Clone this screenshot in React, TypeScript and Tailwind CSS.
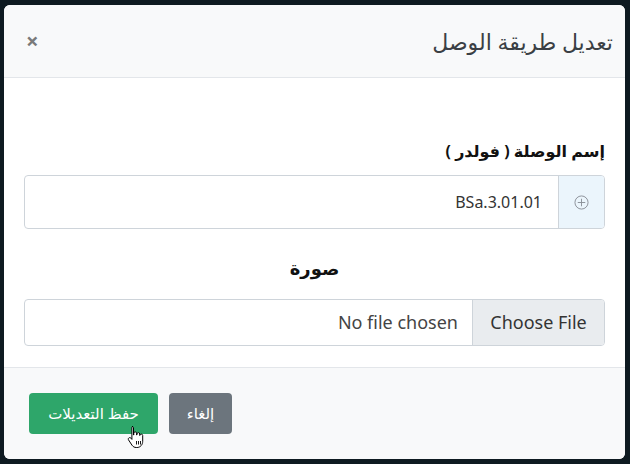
import React from "react";

const FONT = { fontFamily: '"Noto Sans", "DejaVu Sans", sans-serif' };

function HandCursor() {
  return (
    <svg width="18" height="24" viewBox="0 0 18 24" className="absolute left-[127px] top-[425px]">
      <path
        d="M5 1.5c.9 0 1.5.6 1.5 1.5v7h.3V8.2c0-.8.6-1.4 1.4-1.4s1.4.6 1.4 1.4V10h.3V9c0-.8.6-1.4 1.4-1.4s1.4.6 1.4 1.4v1.4h.3c0-.8.6-1.3 1.3-1.3.8 0 1.4.6 1.4 1.4v5.8c0 3.3-2.3 6.2-5.6 6.2H9.3c-1.9 0-3.2-.8-4.3-2.3L1.6 15c-.5-.7-.4-1.6.3-2.1.7-.5 1.6-.3 2.1.3l.9 1.2V3c0-.9.2-1.5 1.1-1.5z"
        fill="#fff"
        stroke="#000"
        strokeWidth="1"
        strokeLinejoin="round"
      />
      <path d="M9.5 16v3.5M11.5 16v3.5M13.5 16v3.5" stroke="#000" strokeWidth="0.9" />
    </svg>
  );
}

export default function App() {
  return (
    <div className="relative w-[630px] h-[464px] bg-[#0e1a21] overflow-hidden" style={FONT}>
      <div dir="rtl" className="absolute left-[4px] top-[5px] w-[621px] h-[454px] bg-white rounded-[6px] overflow-hidden flex flex-col">
        {/* header */}
        <div className="h-[73px] shrink-0 bg-[#f8f9fa] border-b border-[#e3e6ea] flex items-center justify-between pr-[12px] pl-[22px]">
          <h5 className="text-[22px] text-[#3a3f44] leading-none">تعديل طريقة الوصل</h5>
          <span className="text-[22px] font-bold text-[#7a7a7a] leading-none -mt-[3px]">×</span>
        </div>

        {/* body */}
        <div className="flex-1 px-[20px] pt-[61px]">
          <label className="block text-[16px] font-bold text-[#111] leading-[24px] mb-[12px]">إسم الوصلة ( فولدر )</label>
          <div className="flex h-[54px] border border-[#ced4da] rounded-[4px] overflow-hidden">
            <div className="w-[46px] shrink-0 bg-[#ebf5fc] border-l border-[#ced4da] flex items-center justify-center">
              <svg width="15" height="15" viewBox="0 0 16 16">
                <circle cx="8" cy="8" r="7" fill="none" stroke="#8a8f96" strokeWidth="1" />
                <path d="M8 4v8M4 8h8" stroke="#8a8f96" strokeWidth="1" />
              </svg>
            </div>
            <div className="flex-1 flex items-center pr-[16px] text-[16px] text-[#333]">BSa.3.01.01</div>
          </div>

          <div className="text-center text-[18px] font-bold text-[#111] leading-[28px] mt-[25px] mb-[17px]">صورة</div>

          <div className="flex h-[47px] border border-[#ced4da] rounded-[4px] overflow-hidden">
            <div className="w-[132px] shrink-0 bg-[#e9ecef] border-l border-[#ced4da] flex items-center justify-center text-[18px] text-[#333]">
              Choose File
            </div>
            <div className="flex-1 flex items-center pr-[14px] text-[18px] text-[#444]">No file chosen</div>
          </div>
        </div>

        {/* footer */}
        <div className="h-[92px] shrink-0 bg-[#f8f9fa] border-t border-[#e3e6ea] flex justify-end items-start pt-[25px] pl-[25px] gap-[11px]">
          <button className="h-[41px] w-[63px] rounded-[4px] bg-[#6c757d] text-white text-[15px]">إلغاء</button>
          <button className="h-[41px] w-[129px] rounded-[4px] bg-[#2ea66a] text-white text-[15px]">حفظ التعديلات</button>
        </div>
      </div>
      <HandCursor />
    </div>
  );
}
